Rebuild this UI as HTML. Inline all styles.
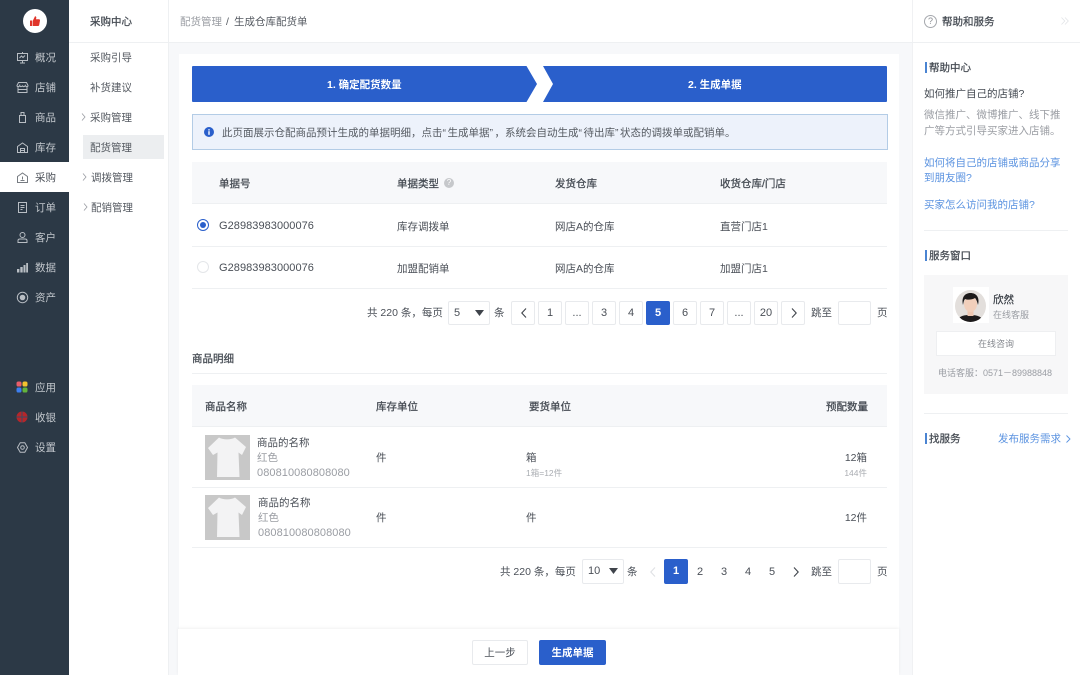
<!DOCTYPE html>
<html lang="zh-CN">
<head>
<meta charset="utf-8">
<title>生成仓库配货单</title>
<style>
*{box-sizing:border-box;margin:0;padding:0}
html,body{width:1080px;height:675px;overflow:hidden;background:#f7f8fa}
body{position:relative;font-family:"Liberation Sans","Noto Sans CJK SC",sans-serif;font-size:10.5px;color:#4a4f57}
.a{position:absolute}
.t{position:absolute;height:16px;line-height:16px;white-space:nowrap;margin-top:1px}
.m{-webkit-text-stroke:.25px currentColor;color:#444a52}
.g{color:#9a9da3}
.nav{color:#c3c8cd}
.sub{color:#555a61}
.q{letter-spacing:1.5px}
.line{position:absolute;height:1px;background:#eef0f2}
.pg{position:absolute;height:24px;line-height:23px;text-align:center;border:1px solid #e8eaed;border-radius:2px;background:#fff;color:#4a4f57;font-size:11px}
.pn{position:absolute;width:24px;height:24px;line-height:24px;text-align:center;color:#4a4f57;font-size:11px}
.on{background:#2a5fcb;border-color:#2a5fcb;color:#fff;font-weight:bold}
.lk{color:#5b93e0}
.bar{position:absolute;left:925px;width:2px;height:11px;background:#4a84d2}
svg{position:absolute;overflow:visible}
</style>
</head>
<body>
<!-- dark nav -->
<div class="a" style="left:0;top:0;width:69px;height:675px;background:#2c3946"></div>
<div class="a" style="left:23px;top:9px;width:24px;height:24px;border-radius:50%;background:#fff"></div>
<svg style="left:29px;top:15px" width="12" height="12" viewBox="0 0 12 12"><path d="M1 5.5h2.4V11H1zM4 5.4 6 1.2c.9 0 1.5.7 1.3 1.6L7 4.3h3c.7 0 1.1.6 1 1.2l-.8 4.5c-.1.6-.5 1-1.1 1H4z" fill="#e0352b"/></svg>
<div class="a" style="left:0;top:162px;width:69px;height:30px;background:#fff"></div>

<svg style="left:16px;top:51px" width="13" height="13" viewBox="0 0 13 13" fill="none" stroke="#b9bec4" stroke-width="1"><path d="M1.500 2.500h10v7h-10zM6.500 1v1.500M6.500 9.500V12M4 12h5M3.500 7l2-2 1.500 1.500L9 4.500"/></svg>
<span class="t nav" style="left:35px;top:49px">概况</span>
<svg style="left:16px;top:81px" width="13" height="13" viewBox="0 0 13 13" fill="none" stroke="#b9bec4" stroke-width="1"><path d="M2.500 1.500h8l1.500 3c0 1.500-2 1.500-2.750 0-.5 1.500-2.500 1.500-2.750 0-.5 1.500-2.500 1.500-2.750 0-.75 1.500-2.750 1.500-2.750 0zM2 6v5.500h9V6M2 8.500h9"/></svg>
<span class="t nav" style="left:35px;top:79px">店铺</span>
<svg style="left:16px;top:111px" width="13" height="13" viewBox="0 0 13 13" fill="none" stroke="#b9bec4" stroke-width="1"><path d="M3.500 4.500h6v7h-6zM5 4.500V1.500h3v3"/></svg>
<span class="t nav" style="left:35px;top:109px">商品</span>
<svg style="left:16px;top:141px" width="13" height="13" viewBox="0 0 13 13" fill="none" stroke="#b9bec4" stroke-width="1"><path d="M1.500 5.500 6.500 2l5 3.500V11.500h-10zM4.500 11.500V7.500h4v4M4.500 9.500h4"/></svg>
<span class="t nav" style="left:35px;top:139px">库存</span>
<svg style="left:16px;top:171px" width="13" height="13" viewBox="0 0 13 13" fill="none" stroke="#777c82" stroke-width="1"><path d="M1.500 5.500 6.500 2l5 3.500V11.500h-10zM6.500 5.500v3M4.500 9.500h4"/></svg>
<span class="t" style="left:35px;top:169px;color:#4a4f57">采购</span>
<svg style="left:16px;top:201px" width="13" height="13" viewBox="0 0 13 13" fill="none" stroke="#b9bec4" stroke-width="1"><path d="M2.500 1.500h8v10h-8zM4.500 4.500h4M4.500 6.500h4M4.500 8.500h2"/></svg>
<span class="t nav" style="left:35px;top:199px">订单</span>
<svg style="left:16px;top:231px" width="13" height="13" viewBox="0 0 13 13" fill="none" stroke="#b9bec4" stroke-width="1"><circle cx="6.500" cy="4" r="2.500"/><path d="M2 11.500V9.500c0-1 1-1.500 2-1.500h5c1 0 2 .5 2 1.500v2z"/></svg>
<span class="t nav" style="left:35px;top:229px">客户</span>
<svg style="left:16px;top:261px" width="13" height="13" viewBox="0 0 13 13" fill="#b9bec4"><rect x="1" y="8" width="2.400" height="3.500"/><rect x="4.300" y="6" width="2.400" height="5.500"/><rect x="7.500" y="4" width="2" height="7.500"/><rect x="10.200" y="2" width="1.800" height="9.500"/></svg>
<span class="t nav" style="left:35px;top:259px">数据</span>
<svg style="left:16px;top:291px" width="13" height="13" viewBox="0 0 13 13" fill="none" stroke="#b9bec4" stroke-width="1"><circle cx="6.500" cy="6.500" r="5.200"/><circle cx="6.500" cy="6.500" r="2.300" fill="#b9bec4"/></svg>
<span class="t nav" style="left:35px;top:289px">资产</span>
<svg style="left:16px;top:381px" width="12" height="12" viewBox="0 0 12 12"><rect x="0.500" y="0.500" width="5" height="5" rx="1.800" fill="#e85d6a"/><rect x="6.500" y="0.500" width="5" height="5" rx="1.800" fill="#f3c22e"/><rect x="0.500" y="6.500" width="5" height="5" rx="1.800" fill="#3d7ff0"/><rect x="6.500" y="6.500" width="5" height="5" rx="1.800" fill="#63b43c"/></svg>
<span class="t nav" style="left:35px;top:379px">应用</span>
<svg style="left:16px;top:411px" width="12" height="12" viewBox="0 0 12 12"><circle cx="6" cy="6" r="5.500" fill="#b5262a"/><path d="M0.500 6h11M6 .5v11" stroke="#3a4a62" stroke-width="1"/></svg>
<span class="t nav" style="left:35px;top:409px">收银</span>
<svg style="left:16px;top:441px" width="13" height="13" viewBox="0 0 13 13" fill="none" stroke="#b9bec4" stroke-width="1"><path d="M4.200 1.800h4.600l2.700 4.700-2.700 4.700H4.200L1.500 6.500z" stroke-linejoin="round"/><circle cx="6.500" cy="6.500" r="1.800"/></svg>
<span class="t nav" style="left:35px;top:439px">设置</span>

<!-- sub nav -->
<div class="a" style="left:69px;top:0;width:100px;height:675px;background:#fff;border-right:1px solid #eef0f2"></div>
<div class="line" style="left:69px;top:42px;width:99px"></div>
<span class="t m" style="left:90px;top:13px">采购中心</span>
<span class="t sub" style="left:90px;top:49px">采购引导</span>
<span class="t sub" style="left:90px;top:79px">补货建议</span>
<svg style="left:81px;top:113px" width="5" height="8" fill="none" stroke="#9a9da3" stroke-width=".8"><path d="M1 .5 4 4 1 7.500"/></svg>
<span class="t sub" style="left:90px;top:109px">采购管理</span>
<div class="a" style="left:83px;top:135px;width:81px;height:24px;background:#eceef0"></div>
<span class="t sub" style="left:90px;top:139px">配货管理</span>
<svg style="left:82px;top:173px" width="5" height="8" fill="none" stroke="#9a9da3" stroke-width=".8"><path d="M1 .5 4 4 1 7.500"/></svg>
<span class="t sub" style="left:91px;top:169px">调拨管理</span>
<svg style="left:83px;top:203px" width="5" height="8" fill="none" stroke="#9a9da3" stroke-width=".8"><path d="M1 .5 4 4 1 7.500"/></svg>
<span class="t sub" style="left:91px;top:199px">配销管理</span>

<!-- header -->
<div class="a" style="left:169px;top:0;width:743px;height:43px;background:#fff;border-bottom:1px solid #eef0f2"></div>
<span class="t g" style="left:180px;top:13px">配货管理</span>
<span class="t" style="left:226px;top:13px;color:#555a61">/</span>
<span class="t" style="left:234px;top:13px;color:#555a61">生成仓库配货单</span>

<!-- main card -->
<div class="a" style="left:179px;top:54px;width:720px;height:621px;background:#fff"></div>

<!-- steps -->
<svg style="left:192px;top:66px" width="695" height="36" viewBox="0 0 695 36"><path d="M1 0H334.500L345 18 334.500 36H1a1 1 0 0 1-1-1V1a1 1 0 0 1 1-1z" fill="#2a5fcb"/><path d="M351 0H694a1 1 0 0 1 1 1V35a1 1 0 0 1-1 1H351L361 18z" fill="#2a5fcb"/></svg>
<span class="t" style="left:327px;top:76px;color:#fff;font-weight:bold;font-size:10.500px">1. 确定配货数量</span>
<span class="t" style="left:688px;top:76px;color:#fff;font-weight:bold;font-size:10.500px">2. 生成单据</span>

<!-- notice -->
<div class="a" style="left:192px;top:114px;width:696px;height:36px;background:#edf2fb;border:1px solid #b3cce6"></div>
<svg style="left:204px;top:127px" width="10" height="10" viewBox="0 0 10 10"><circle cx="5" cy="5" r="5" fill="#2a5fcb"/><rect x="4.300" y="4.200" width="1.400" height="3.600" fill="#fff"/><rect x="4.300" y="2.200" width="1.400" height="1.300" fill="#fff"/></svg>
<span class="t" style="left:222px;top:124px;color:#555a61">此页面展示仓配商品预计生成的单据明细，点击<span class="q">“</span>生成单据<span class="q">”</span>，系统会自动生成<span class="q">“</span>待出库<span class="q">”</span>状态的调拨单或配销单。</span>

<!-- table 1 -->
<div class="a" style="left:192px;top:162px;width:695px;height:42px;background:#f7f8fa;border-bottom:1px solid #eef0f2"></div>
<span class="t m" style="left:219px;top:175px">单据号</span>
<span class="t m" style="left:397px;top:175px">单据类型</span>
<div class="a" style="left:444px;top:178px;width:10px;height:10px;border-radius:50%;background:#c6c8cb;color:#fff;font-size:8px;line-height:10px;text-align:center">?</div>
<span class="t m" style="left:555px;top:175px">发货仓库</span>
<span class="t m" style="left:720px;top:175px">收货仓库/门店</span>

<div class="a" style="left:197px;top:219px;width:12px;height:12px;border-radius:50%;border:1px solid #2a5fcb;background:#fff"></div>
<div class="a" style="left:200px;top:222px;width:6px;height:6px;border-radius:50%;background:#2a5fcb"></div>
<span class="t" style="left:219px;top:217px;font-size:11px;letter-spacing:.05px">G28983983000076</span>
<span class="t" style="left:397px;top:218px">库存调拨单</span>
<span class="t" style="left:555px;top:218px">网店A的仓库</span>
<span class="t" style="left:720px;top:218px">直营门店1</span>
<div class="line" style="left:192px;top:246px;width:695px"></div>

<div class="a" style="left:197px;top:261px;width:12px;height:12px;border-radius:50%;border:1px solid #e4e6e9;background:#fff"></div>
<span class="t" style="left:219px;top:259px;font-size:11px;letter-spacing:.05px">G28983983000076</span>
<span class="t" style="left:397px;top:260px">加盟配销单</span>
<span class="t" style="left:555px;top:260px">网店A的仓库</span>
<span class="t" style="left:720px;top:260px">加盟门店1</span>
<div class="line" style="left:192px;top:288px;width:695px"></div>

<!-- pagination 1 -->
<span class="t" style="left:367px;top:304px">共 220 条，每页</span>
<div class="pg" style="left:448px;top:301px;width:42px;text-align:left;padding-left:5px">5</div>
<svg style="left:475px;top:310px" width="9" height="6"><path d="M0 0h9L4.500 6z" fill="#3f444b"/></svg>
<span class="t" style="left:494px;top:304px">条</span>
<div class="pg" style="left:511px;top:301px;width:24px"></div>
<svg style="left:521px;top:308px" width="6" height="10" fill="none" stroke="#3f444b" stroke-width="1.100"><path d="M5 .5 .8 5 5 9.500"/></svg>
<div class="pg" style="left:538px;top:301px;width:24px">1</div>
<div class="pg" style="left:565px;top:301px;width:24px">...</div>
<div class="pg" style="left:592px;top:301px;width:24px">3</div>
<div class="pg" style="left:619px;top:301px;width:24px">4</div>
<div class="pg on" style="left:646px;top:301px;width:24px">5</div>
<div class="pg" style="left:673px;top:301px;width:24px">6</div>
<div class="pg" style="left:700px;top:301px;width:24px">7</div>
<div class="pg" style="left:727px;top:301px;width:24px">...</div>
<div class="pg" style="left:754px;top:301px;width:24px">20</div>
<div class="pg" style="left:781px;top:301px;width:24px"></div>
<svg style="left:791px;top:308px" width="6" height="10" fill="none" stroke="#3f444b" stroke-width="1.100"><path d="M1 .5 5.200 5 1 9.500"/></svg>
<span class="t" style="left:811px;top:304px">跳至</span>
<div class="pg" style="left:838px;top:301px;width:33px"></div>
<span class="t" style="left:877px;top:304px">页</span>

<span class="t m" style="left:192px;top:350px">商品明细</span>
<div class="line" style="left:192px;top:373px;width:695px"></div>

<!-- table 2 -->
<div class="a" style="left:192px;top:385px;width:695px;height:42px;background:#f7f8fa;border-bottom:1px solid #eef0f2"></div>
<span class="t m" style="left:205px;top:398px">商品名称</span>
<span class="t m" style="left:376px;top:398px">库存单位</span>
<span class="t m" style="left:529px;top:398px">要货单位</span>
<span class="t m" style="left:826px;top:398px">预配数量</span>

<svg style="left:205px;top:435px" width="45" height="45" viewBox="0 0 45 45"><rect width="45" height="45" fill="#c8c8c8"/><path d="M14 2.500C18 5 26 5 30 2.500L41 12 37 20 33.500 17.500 34.500 42 12 42 12.500 17.500 8 20 3 13z" fill="#f3f3f4"/></svg>
<span class="t" style="left:257px;top:434px;color:#4a4f57">商品的名称</span>
<span class="t g" style="left:257px;top:449px">红色</span>
<span class="t g" style="left:257px;top:464px;font-size:11px;letter-spacing:.07px">080810080808080</span>
<span class="t" style="left:376px;top:449px">件</span>
<span class="t" style="left:526px;top:449px">箱</span>
<span class="t g" style="left:526px;top:464px;font-size:8.500px;color:#aaadb2">1箱=12件</span>
<span class="t" style="right:213px;top:449px">12箱</span>
<span class="t g" style="right:213px;top:464px;font-size:8.500px;color:#aaadb2">144件</span>
<div class="line" style="left:192px;top:487px;width:695px"></div>

<svg style="left:205px;top:495px" width="45" height="45" viewBox="0 0 45 45"><rect width="45" height="45" fill="#c8c8c8"/><path d="M14 2.500C18 5 26 5 30 2.500L41 12 37 20 33.500 17.500 34.500 42 12 42 12.500 17.500 8 20 3 13z" fill="#f3f3f4"/></svg>
<span class="t" style="left:258px;top:494px;color:#4a4f57">商品的名称</span>
<span class="t g" style="left:258px;top:509px">红色</span>
<span class="t g" style="left:258px;top:524px;font-size:11px;letter-spacing:.07px">080810080808080</span>
<span class="t" style="left:376px;top:509px">件</span>
<span class="t" style="left:526px;top:509px">件</span>
<span class="t" style="right:213px;top:509px">12件</span>
<div class="line" style="left:192px;top:547px;width:695px"></div>

<!-- pagination 2 -->
<span class="t" style="left:500px;top:563px">共 220 条，每页</span>
<div class="pg" style="left:582px;top:559px;width:42px;text-align:left;padding-left:5px;height:25px">10</div>
<svg style="left:609px;top:568px" width="9" height="6"><path d="M0 0h9L4.500 6z" fill="#3f444b"/></svg>
<span class="t" style="left:627px;top:563px">条</span>
<svg style="left:650px;top:567px" width="6" height="10" fill="none" stroke="#dfe1e4" stroke-width="1.100"><path d="M5 .5 .8 5 5 9.500"/></svg>
<div class="pg on" style="left:664px;top:559px;width:24px;height:25px">1</div>
<div class="pn" style="left:688px;top:560px">2</div>
<div class="pn" style="left:712px;top:560px">3</div>
<div class="pn" style="left:736px;top:560px">4</div>
<div class="pn" style="left:760px;top:560px">5</div>
<svg style="left:793px;top:567px" width="6" height="10" fill="none" stroke="#3f444b" stroke-width="1.100"><path d="M1 .5 5.200 5 1 9.500"/></svg>
<span class="t" style="left:811px;top:563px">跳至</span>
<div class="pg" style="left:838px;top:559px;width:33px;height:25px"></div>
<span class="t" style="left:877px;top:563px">页</span>

<!-- bottom bar -->
<div class="a" style="left:178px;top:629px;width:721px;height:46px;background:#fff;box-shadow:0 -1px 3px rgba(0,0,0,.06)"></div>
<div class="pg" style="left:472px;top:640px;width:56px;height:25px;font-size:10.500px;line-height:24px">上一步</div>
<div class="pg on" style="left:539px;top:640px;width:67px;height:25px;font-size:10.500px;line-height:24px">生成单据</div>

<!-- right panel -->
<div class="a" style="left:912px;top:0;width:168px;height:675px;background:#fff;border-left:1px solid #f0f1f3"></div>
<div class="line" style="left:912px;top:42px;width:168px"></div>
<div class="a" style="left:924px;top:15px;width:13px;height:13px;border-radius:50%;border:1px solid #a5a8ad;color:#8a8d92;font-size:9px;line-height:11px;text-align:center">?</div>
<span class="t m" style="left:942px;top:13px">帮助和服务</span>
<svg style="left:1061px;top:17px" width="8" height="8" fill="none" stroke="#e2e4e7" stroke-width=".8"><path d="M.5.500 3.800 4 .5 7.500M4 .500 7.300 4 4 7.500"/></svg>

<div class="bar" style="top:62px"></div>
<span class="t m" style="left:929px;top:59px">帮助中心</span>
<span class="t" style="left:924px;top:85px;color:#444a52">如何推广自己的店铺?</span>
<span class="t g" style="left:924px;top:106px">微信推广、微博推广、线下推</span>
<span class="t g" style="left:924px;top:122px">广等方式引导买家进入店铺。</span>
<span class="t lk" style="left:924px;top:154px">如何将自己的店铺或商品分享</span>
<span class="t lk" style="left:924px;top:169px">到朋友圈?</span>
<span class="t lk" style="left:924px;top:196px">买家怎么访问我的店铺?</span>
<div class="line" style="left:924px;top:230px;width:144px"></div>

<div class="bar" style="top:250px"></div>
<span class="t m" style="left:929px;top:247px">服务窗口</span>
<div class="a" style="left:924px;top:275px;width:144px;height:119px;background:#f7f7f8"></div>
<div class="a" style="left:953px;top:287px;width:36px;height:36px;background:#fff"></div>
<svg style="left:955px;top:290px" width="31" height="32" viewBox="0 0 31 32"><defs><clipPath id="c"><ellipse cx="15.500" cy="16" rx="15.500" ry="16"/></clipPath></defs><g clip-path="url(#c)"><rect width="31" height="32" fill="#e3dfdc"/><path d="M2 32c1-6 7-7 13-7s12 1 14 7z" fill="#1c1a1b"/><rect x="12.500" y="19" width="6" height="7" fill="#eec7b2"/><ellipse cx="15.500" cy="14" rx="6.500" ry="8" fill="#f1cfbb"/><path d="M8 15C6 6 11 3 15.500 3 21 3 25 7 23 15c-1-4-2-6-3-7-3 2-8 2-10 1-1 1-1.500 3-2 6z" fill="#1d1a1a"/></g></svg>
<span class="t m" style="left:993px;top:291px;color:#3d4249">欣然</span>
<span class="t g" style="left:993px;top:306px;font-size:9px">在线客服</span>
<div class="a" style="left:936px;top:331px;width:120px;height:25px;background:#fff;border:1px solid #eeeff1;text-align:center;line-height:24px;font-size:9px;color:#85888e">在线咨询</div>
<span class="t g" style="left:938px;top:364px;font-size:9px">电话客服：0571－89988848</span>
<div class="line" style="left:924px;top:413px;width:144px"></div>

<div class="bar" style="top:433px"></div>
<span class="t m" style="left:929px;top:430px">找服务</span>
<span class="t lk" style="left:998px;top:430px">发布服务需求</span>
<svg style="left:1066px;top:435px" width="5" height="8" fill="none" stroke="#5b93e0" stroke-width=".9"><path d="M.5.500 4 4 .5 7.500"/></svg>
</body>
</html>
